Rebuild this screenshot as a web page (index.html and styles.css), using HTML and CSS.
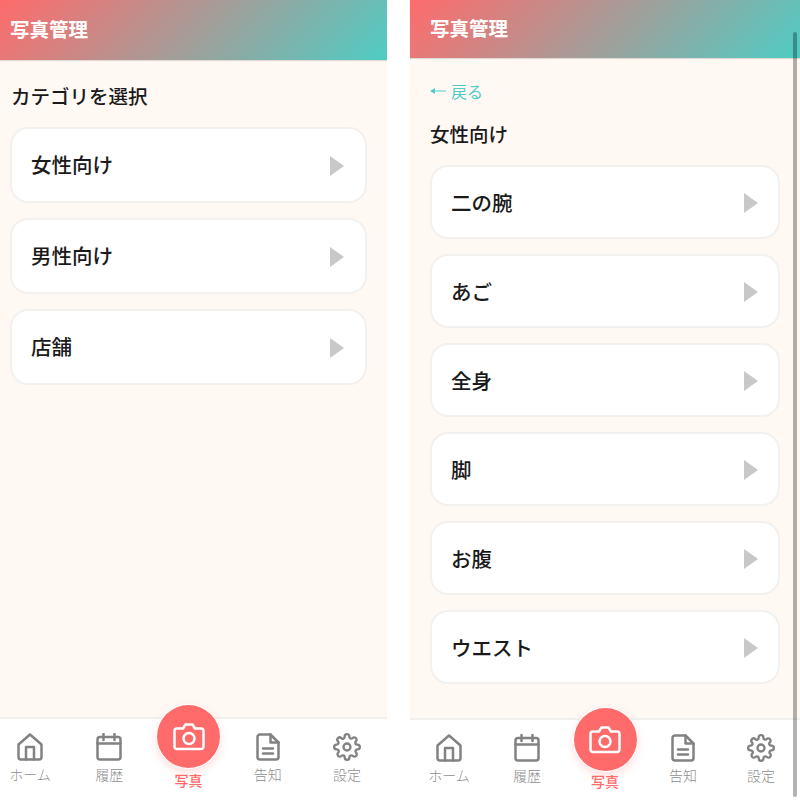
FILE: index.html
```html
<!DOCTYPE html>
<html lang="ja">
<head>
<meta charset="utf-8">
<title>写真管理</title>
<link rel="stylesheet" href="styles.css">
</head>
<body>
<svg class="defs" width="0" height="0" aria-hidden="true">
  <symbol id="i-home" viewBox="0 0 26 28"><path d="M1.500 11.500 13 1.500l11.500 10V24a2.500 2.500 0 0 1-2.500 2.500H4A2.500 2.500 0 0 1 1.500 24z"/><path d="M9 26.500V14h8v12.500"/></symbol>
  <symbol id="i-cal" viewBox="0 0 26 28"><rect x="1.500" y="4" width="23" height="22.500" rx="2.500"/><path d="M7.500 1v6M18.500 1v6M1.500 10.500h23"/></symbol>
  <symbol id="i-doc" viewBox="0 0 24 28"><path d="M14.500 1.500H4A2.500 2.500 0 0 0 1.500 4v20A2.500 2.500 0 0 0 4 26.500h16a2.500 2.500 0 0 0 2.500-2.500V9.500z"/><path d="M14.500 1.500v8h8M7 15.500h10M7 20.500h10"/></symbol>
  <symbol id="i-gear" viewBox="0 0 24 24"><circle cx="12" cy="12" r="3"/><path d="M19.400 15a1.650 1.650 0 0 0 .33 1.820l.06.06a2 2 0 1 1-2.830 2.830l-.06-.06a1.650 1.650 0 0 0-2.820 1.170V21a2 2 0 1 1-4 0v-.09a1.650 1.650 0 0 0-2.730-1.260l-.06.06a2 2 0 1 1-2.830-2.830l.06-.06a1.650 1.650 0 0 0-1.170-2.820H3a2 2 0 1 1 0-4h.09a1.650 1.650 0 0 0 1.260-2.730l-.06-.06a2 2 0 1 1 2.830-2.830l.06.06a1.650 1.650 0 0 0 2.820-1.170V3a2 2 0 1 1 4 0v.09a1.650 1.650 0 0 0 2.730 1.260l.06-.06a2 2 0 1 1 2.830 2.830l-.06.06a1.650 1.650 0 0 0 1.170 2.820H21a2 2 0 1 1 0 4h-.09a1.650 1.650 0 0 0-1.510 1z"/></symbol>
  <symbol id="i-camera" viewBox="0 0 32 28"><path d="M30.500 23.500a2.500 2.500 0 0 1-2.500 2.500H4a2.500 2.500 0 0 1-2.500-2.500V8A2.500 2.500 0 0 1 4 5.500h6l2.500-4h7l2.500 4h6A2.500 2.500 0 0 1 30.500 8z"/><circle cx="16" cy="15.500" r="5.500"/></symbol>
</svg>

<div class="app">
  <section class="screen screen-left">
    <header class="topbar topbar-left"><h1 class="topbar-title">写真管理</h1></header>
    <main class="content content-left">
      <h2 class="section-title">カテゴリを選択</h2>
      <ul class="card-list">
        <li class="card"><span>女性向け</span><i class="chevron"></i></li>
        <li class="card"><span>男性向け</span><i class="chevron"></i></li>
        <li class="card"><span>店舗</span><i class="chevron"></i></li>
      </ul>
    </main>
    <nav class="tabbar tabbar-left">
      <a class="tab"><svg class="tab-icon"><use href="#i-home"/></svg><span>ホーム</span></a>
      <a class="tab"><svg class="tab-icon"><use href="#i-cal"/></svg><span>履歴</span></a>
      <a class="tab tab-main"><span class="fab"><svg class="fab-icon"><use href="#i-camera"/></svg></span><span>写真</span></a>
      <a class="tab"><svg class="tab-icon"><use href="#i-doc"/></svg><span>告知</span></a>
      <a class="tab"><svg class="tab-icon tab-icon-gear"><use href="#i-gear"/></svg><span>設定</span></a>
    </nav>
  </section>

  <section class="screen screen-right">
    <header class="topbar topbar-right"><h1 class="topbar-title">写真管理</h1></header>
    <main class="content content-right">
      <a class="back"><svg class="back-arrow" viewBox="0 0 16 8"><path d="M0 4l5-3v2.500h11v1H5V7z"/></svg><span>戻る</span></a>
      <h2 class="section-title section-title-sub">女性向け</h2>
      <ul class="card-list card-list-right">
        <li class="card"><span>二の腕</span><i class="chevron"></i></li>
        <li class="card"><span>あご</span><i class="chevron"></i></li>
        <li class="card"><span>全身</span><i class="chevron"></i></li>
        <li class="card"><span>脚</span><i class="chevron"></i></li>
        <li class="card"><span>お腹</span><i class="chevron"></i></li>
        <li class="card"><span>ウエスト</span><i class="chevron"></i></li>
      </ul>
    </main>
    <nav class="tabbar tabbar-right">
      <a class="tab"><svg class="tab-icon"><use href="#i-home"/></svg><span>ホーム</span></a>
      <a class="tab"><svg class="tab-icon"><use href="#i-cal"/></svg><span>履歴</span></a>
      <a class="tab tab-main"><span class="fab"><svg class="fab-icon"><use href="#i-camera"/></svg></span><span>写真</span></a>
      <a class="tab"><svg class="tab-icon"><use href="#i-doc"/></svg><span>告知</span></a>
      <a class="tab"><svg class="tab-icon tab-icon-gear"><use href="#i-gear"/></svg><span>設定</span></a>
    </nav>
    <div class="scrollbar"></div>
  </section>
</div>
</body>
</html>
```

FILE: styles.css
```css
* { box-sizing: border-box; }
html, body { margin: 0; padding: 0; background: #fff; }
body {
  width: 800px;
  height: 800px;
  overflow: hidden;
  font-family: "Noto Sans CJK JP", "Noto Sans", sans-serif;
  color: #1a1a1a;
}
.defs { position: absolute; }
.app { display: flex; gap: 23px; height: 800px; }
.screen { position: relative; display: flex; flex-direction: column; height: 800px; }
.screen-left { width: 387px; }
.screen-right { width: 390px; }

.topbar {
  display: flex;
  align-items: center;
  background: linear-gradient(135deg, #ff6b6b, #4ecdc4);
  box-shadow: 0 1px 1px rgba(0, 0, 0, .12);
  position: relative;
}
.topbar-left { height: 60px; padding: 0 10px; }
.topbar-right { height: 58px; padding: 0 20px; }
.topbar-title { margin: 0 0 2px; font-size: 19.500px; font-weight: 700; line-height: 1; color: #fff; }

.content { flex: 1; background: #fff8f3; }
.content-left { padding: 24px 20px 0 10px; }
.content-right { padding: 21px 20px 0; }
.section-title { margin: 0; padding-left: 1px; font-size: 19.500px; font-weight: 500; line-height: 24px; }
.section-title-sub { padding-left: 0; margin-top: 19px; }
.back { display: flex; align-items: center; gap: 5px; font-size: 16px; line-height: 24px; font-weight: 400; color: #4ecdc4; }
.back-arrow { width: 16px; height: 8px; fill: #4ecdc4; }

.card-list { list-style: none; margin: 19px 0 0; padding: 0; display: flex; flex-direction: column; gap: 15px; }
.card {
  display: flex;
  align-items: center;
  justify-content: space-between;
  height: 76px;
  padding: 0 21px 0 19px;
  background: #fff;
  border: 2px solid #f2f1f0;
  border-radius: 18px;
  font-size: 20.500px;
  font-weight: 500;
}
.content-left .card span { margin-bottom: 2px; }
.card-list-right { margin-top: 19px; }
.card-list-right .card { height: 74px; padding-right: 20px; }
.chevron {
  display: block;
  width: 0;
  height: 0;
  margin-top: 2px;
  border-style: solid;
  border-width: 10px 0 10px 14px;
  border-color: transparent transparent transparent #c8c8c8;
}

.tabbar { height: 83px; background: #fff; border-top: 2px solid #f1f0ef; display: flex; align-items: flex-start; }
.tabbar-left { padding-right: 10px; justify-content: space-between; }
.tabbar-right { height: 82px; }
.tab {
  display: flex;
  flex-direction: column;
  align-items: center;
  width: 60px;
  padding-top: 14px;
  font-size: 14px;
  line-height: 20px;
  font-weight: 300;
  color: #8f8f8f;
}
.tabbar-right .tab { flex: 1; width: auto; }
.tab-icon { width: 26px; height: 28px; margin-bottom: 3px; fill: none; stroke: #828282; stroke-width: 2.500; stroke-linejoin: round; stroke-linecap: round; overflow: visible; }
.tab-icon-gear { width: 28px; height: 28px; stroke-width: 2; }
.tab-main { color: #ff6b6b; font-weight: 500; padding-top: 0; }
.fab {
  display: flex;
  align-items: center;
  justify-content: center;
  width: 63px;
  height: 63px;
  margin-top: -14px;
  margin-bottom: 2px;
  border-radius: 50%;
  background: #ff6b6b;
  box-shadow: 0 0 0 1px #fff, 0 4px 10px rgba(255, 107, 107, .25);
}
.tabbar-right .fab { margin-top: -12px; margin-bottom: 0; }
.fab-icon { width: 32px; height: 28px; fill: none; stroke: #fff; stroke-width: 2.500; stroke-linejoin: round; stroke-linecap: round; }
.scrollbar { position: absolute; top: 32px; right: 3px; bottom: 3px; width: 4px; border-radius: 2px; background: rgba(0, 0, 0, .3); }
```
